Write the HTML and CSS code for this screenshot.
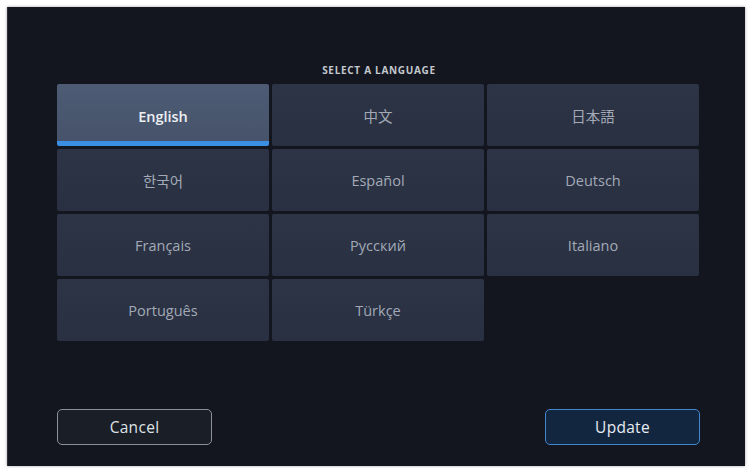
FILE: index.html
```html
<!DOCTYPE html>
<html lang="en">
<head>
<meta charset="utf-8">
<title>Select a language</title>
<link rel="stylesheet" href="styles.css">
</head>
<body>
<div class="panel">
  <div class="title">SELECT A LANGUAGE</div>
  <div class="grid">
    <div class="cell selected">English</div>
    <div class="cell">中文</div>
    <div class="cell jp">日本語</div>
    <div class="cell kr">한국어</div>
    <div class="cell">Español</div>
    <div class="cell">Deutsch</div>
    <div class="cell">Français</div>
    <div class="cell">Русский</div>
    <div class="cell">Italiano</div>
    <div class="cell">Português</div>
    <div class="cell">Türkçe</div>
  </div>
  <div class="actions">
    <button class="btn cancel">Cancel</button>
    <button class="btn update">Update</button>
  </div>
</div>
</body>
</html>
```
FILE: styles.css
```css
* { box-sizing: border-box; }
html, body { margin: 0; padding: 0; background: #ffffff; }
body {
  width: 751px;
  height: 468px;
  padding: 7px 6px 2px 7px;
  font-family: "Open Sans", "Noto Sans CJK SC", sans-serif;
}
.panel {
  width: 738px;
  height: 459px;
  background: #13161e;
  border-left: 1px solid #2c2f36;
  box-shadow: 0 0 3px rgba(0,0,0,0.35);
  padding: 58px 46px 0 49px;
  display: flex;
  flex-direction: column;
}
.title {
  text-align: center;
  font-size: 10px;
  line-height: 11px;
  font-weight: 700;
  letter-spacing: 0.7px;
  color: #c4c8cf;
  margin-bottom: 8px;
  padding-left: 2px;
}
.grid {
  display: grid;
  grid-template-columns: repeat(3, 1fr);
  grid-auto-rows: 62px;
  gap: 3px;
}
.cell {
  background: linear-gradient(#2c3446, #283042);
  border-radius: 2px;
  display: flex;
  align-items: center;
  justify-content: center;
  color: #a3aab6;
  font-size: 14.5px;
  font-weight: 400;
}
.cell.jp { font-family: "Noto Sans CJK JP", "Open Sans", sans-serif; }
.cell.kr { font-family: "Noto Sans CJK KR", "Open Sans", sans-serif; }
.cell.selected {
  background: linear-gradient(#4d5b74, #46536b);
  color: #eef0f3;
  font-weight: 600;
  border-bottom: 5px solid #3a8fe2;
  padding-top: 7px;
}
.actions {
  margin-top: 68px;
  display: flex;
  justify-content: space-between;
}
.btn {
  width: 155px;
  height: 36px;
  border-radius: 5px;
  font-family: "Open Sans", sans-serif;
  font-size: 15.5px;
  font-weight: 500;
  letter-spacing: 0.3px;
  padding: 0;
}
.cancel {
  background: #1a1e27;
  border: 1.5px solid #8b9099;
  color: #dfe2e6;
}
.update {
  background: #132640;
  border: 1.5px solid #3f86cf;
  color: #e8ecf2;
  margin-right: -1px;
}
```
